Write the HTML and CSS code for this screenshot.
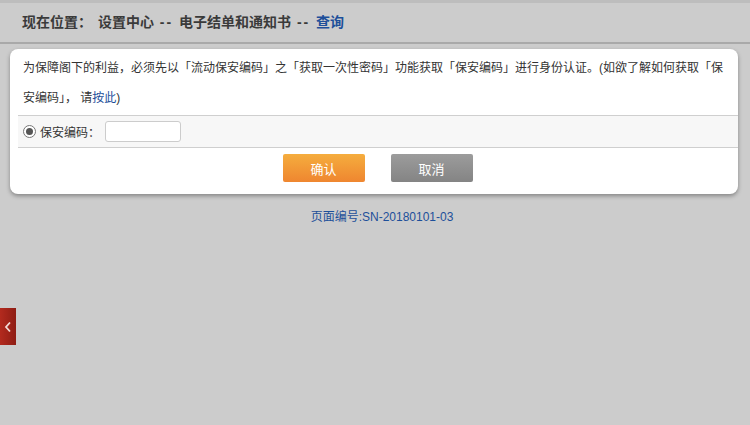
FILE: index.html
```html
<!DOCTYPE html>
<html lang="zh-CN">
<head>
    <meta charset="UTF-8">
    <title>保安编码</title>
    <link rel="stylesheet" href="styles.css">
</head>
<body>
    <div class="topbar"></div>
    <div class="crumb">
        现在位置：&nbsp;设置中心 <span class="dash">--</span> 电子结单和通知书 <span class="dash">--</span> <span class="crumb-cur">查询</span>
    </div>

    <div class="card">
        <p class="notice">为保障阁下的利益，必须先以「流动保安编码」之「获取一次性密码」功能获取「保安编码」进行身份认证。(如欲了解如何获取「保安编码」， 请<a href="#">按此</a>)</p>
        <div class="code-row">
            <span class="radio"><span class="radio-dot"></span></span>
            <label for="otp">保安编码：</label>
            <input type="text" id="otp" class="otp-input">
        </div>
        <div class="actions">
            <button class="btn btn-ok">确认</button>
            <button class="btn btn-cancel">取消</button>
        </div>
    </div>

    <div class="page-no">页面编号:SN-20180101-03</div>

    <div class="side-tab">
        <svg width="8" height="12" viewBox="0 0 8 12"><path d="M6 1.5 L2 6 L6 10.5" fill="none" stroke="#f2dcd8" stroke-width="1.8"/></svg>
    </div>
</body>
</html>
```

FILE: styles.css
```css
body {
    margin: 0;
    padding: 0;
    background: #cccccc;
    font-family: "Liberation Sans", "Noto Sans CJK SC", sans-serif;
    color: #333;
    font-size: 12px;
    min-height: 425px;
}
.topbar {
    height: 3px;
    background: #bdbdbd;
}
.crumb {
    height: 39px;
    line-height: 39px;
    padding-left: 22px;
    font-size: 14px;
    font-weight: bold;
    color: #3a3a3a;
    border-bottom: 2px solid #a9a9a9;
    word-spacing: 2px;
}
.crumb .dash {
    letter-spacing: 2px;
}
.crumb-cur {
    color: #1d4f9a;
}
.card {
    margin: 5px 12px 0 10px;
    background: #fff;
    border-radius: 8px;
    box-shadow: 0 2px 4px rgba(0,0,0,0.35);
    padding: 4px 0 12px 0;
}
.notice {
    margin: 0;
    padding: 0 10px 0 13px;
    line-height: 30px;
    font-size: 12px;
    color: #333;
}
.notice a {
    color: #1d4f9a;
    text-decoration: none;
}
.code-row {
    margin: 2px 0 0 8px;
    height: 31px;
    background: #f7f7f7;
    border-top: 1px solid #cfcfcf;
    border-bottom: 1px solid #cfcfcf;
    display: flex;
    align-items: center;
    padding-left: 5px;
}
.radio {
    width: 11px;
    height: 11px;
    border: 1px solid #777;
    border-radius: 50%;
    background: #fff;
    display: flex;
    align-items: center;
    justify-content: center;
}
.radio-dot {
    width: 7px;
    height: 7px;
    border-radius: 50%;
    background: #555;
}
.code-row label {
    margin-left: 4px;
    font-size: 12px;
}
.otp-input {
    margin-left: 5px;
    width: 72px;
    height: 17px;
    border: 1px solid #ccc;
    border-radius: 3px;
    padding: 1px;
    background: #fff;
}
.actions {
    display: flex;
    justify-content: center;
    gap: 26px;
    padding-top: 6px;
    padding-left: 7px;
}
.btn {
    width: 82px;
    height: 28px;
    border: none;
    border-radius: 2px;
    color: #fff;
    font-size: 13px;
    font-family: "Liberation Sans", "Noto Sans CJK SC", sans-serif;
}
.btn-ok {
    background: linear-gradient(#f5ad3e, #ef8630);
}
.btn-cancel {
    background: linear-gradient(#9c9c9c, #848484);
}
.page-no {
    margin-top: 13px;
    padding-left: 14px;
    text-align: center;
    color: #1d4f9a;
    font-size: 12px;
}
.side-tab {
    position: absolute;
    left: 0;
    top: 308px;
    width: 16px;
    height: 37px;
    background: linear-gradient(90deg, #b32a1e, #8e1d14);
    display: flex;
    align-items: center;
    justify-content: center;
}
```
